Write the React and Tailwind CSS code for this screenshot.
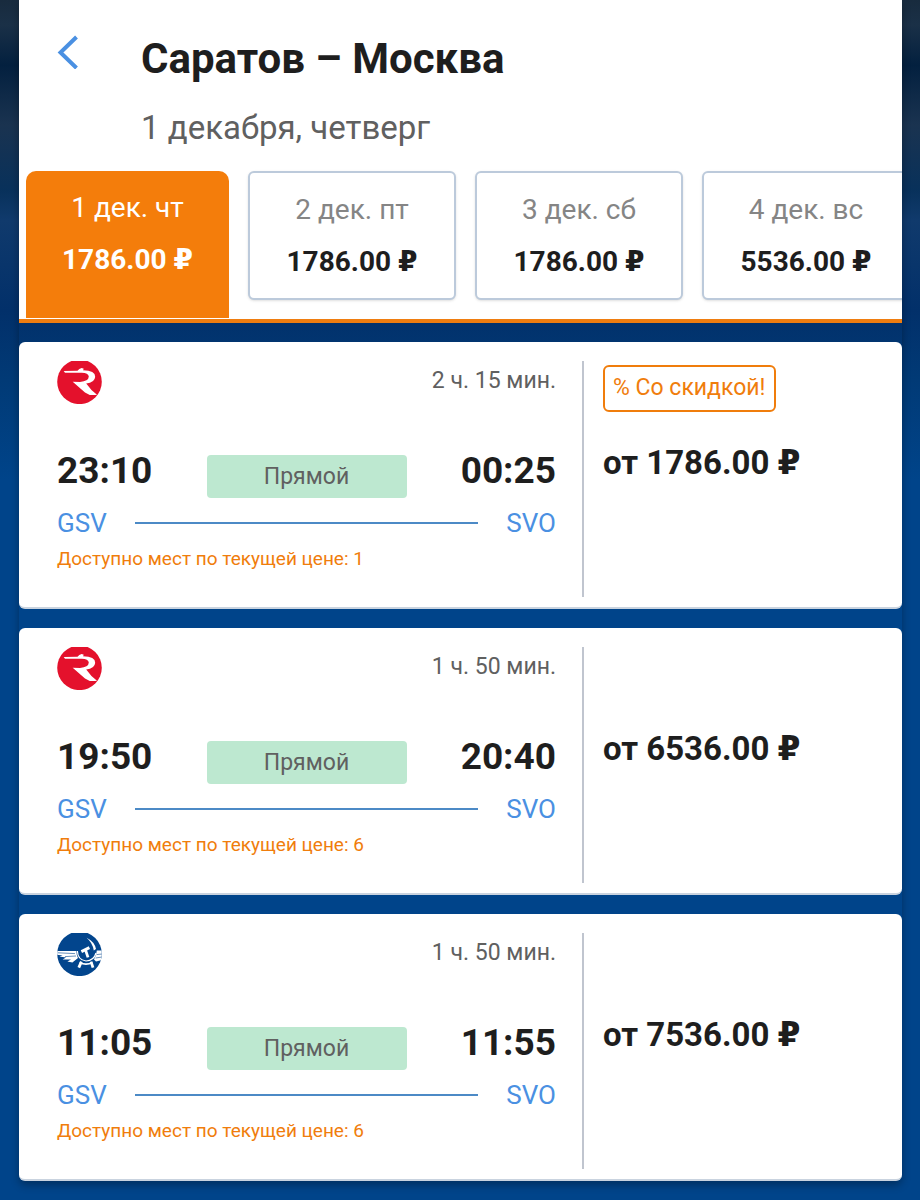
import React, { useState } from 'react';

const days = [
  { id: 1, date: '1 дек. чт', price: '1786.00' },
  { id: 2, date: '2 дек. пт', price: '1786.00' },
  { id: 3, date: '3 дек. сб', price: '1786.00' },
  { id: 4, date: '4 дек. вс', price: '5536.00' },
];

const flights = [
  { id: 1, airline: 'rossiya', duration: '2 ч. 15 мин.', departure: '23:10', arrival: '00:25', seats: 1, price: '1786.00', discount: true },
  { id: 2, airline: 'rossiya', duration: '1 ч. 50 мин.', departure: '19:50', arrival: '20:40', seats: 6, price: '6536.00', discount: false },
  { id: 3, airline: 'aeroflot', duration: '1 ч. 50 мин.', departure: '11:05', arrival: '11:55', seats: 6, price: '7536.00', discount: false },
];

const RossiyaLogo = () => (
  <svg width="45" height="43" viewBox="0 0 45 43" role="img" aria-label="Россия">
    <circle cx="22.5" cy="20.8" r="22.3" fill="#e4112c" />
    <path
      d="M6.7 10 L20.5 9.8 Q22 7.4 24.7 7 L26.8 7.8 L26 9.3 Q38.4 9.6 38.2 15.8 Q37.8 21.6 29.2 22.6 Q34 29.6 40 33.8 Q32.6 35 28 31.4 L15.7 20.7 L23 20.9 Q31.6 20.4 31.8 15.6 Q31.4 12 24.7 11.8 L8 11.8 Z"
      fill="#fff"
    />
  </svg>
);

const AeroflotLogo = () => (
  <svg width="45" height="43" viewBox="0 0 45 43" role="img" aria-label="Аэрофлот">
    <defs>
      <clipPath id="aeroflot-disc">
        <circle cx="22.5" cy="20.8" r="22.3" />
      </clipPath>
    </defs>
    <circle cx="22.5" cy="20.8" r="22.3" fill="#02458d" />
    <g clipPath="url(#aeroflot-disc)">
      {/* Wings */}
      <path d="M0 18 L19.4 18 Q19.4 22 21 25 L15.4 29.6 L10.4 28.6 L14 26.6 L5.6 26.4 L9 24.4 L2.4 23.6 L5.6 22.4 L0 21.8 Z" fill="#fff" />
      <path d="M1 19.8 L18 20.6 M8 23.6 L19 23" stroke="#02458d" strokeWidth="0.6" />
      <path d="M39.8 17.6 L45 17.6 L45 27 L39 28.6 L37 26.4 Q39.6 22.4 39.8 17.6 Z" fill="#fff" />
      <path d="M39.6 21.6 L45 21 M38.6 25 L45 24" stroke="#02458d" strokeWidth="0.6" />
      {/* Gear */}
      <path d="M20.4 18 Q20.6 26.8 29 28 Q37 27.6 39 20" fill="none" stroke="#fff" strokeWidth="1.2" />
      <path d="M24.4 28.6 L21.8 34.6 M34 28.6 L36 34.6" stroke="#fff" strokeWidth="2.8" />
      <path d="M22.6 29.8 Q29 32.4 35.4 29.8" fill="none" stroke="#fff" strokeWidth="1.6" />
      {/* Hammer and sickle */}
      <path d="M24.4 18.6 L32.4 14.6" stroke="#fff" strokeWidth="3" />
      <path d="M28.4 16.6 L31 24.4" stroke="#fff" strokeWidth="2.8" />
      <path d="M29.6 4.8 Q37.6 8.8 39 16 L36.8 17.4 Q35.4 9.6 29.6 4.8 Z" fill="#fff" />
    </g>
  </svg>
);

const Ruble = () => <span className="font-['DejaVu_Sans',sans-serif] leading-none">₽</span>;

const FlightCard = ({ flight }) => (
  <article className="flex rounded-md border-b-2 border-[#c9d3df] bg-white pt-[19px] pb-[10px]">
    <div className="flex-1 pr-[26px] pb-[26px] pl-[38px]">
      <div className="flex items-start justify-between">
        {flight.airline === 'rossiya' ? <RossiyaLogo /> : <AeroflotLogo />}
        <span className="text-[23px] leading-10 text-[#606060]">{flight.duration}</span>
      </div>

      <div className="mt-10 flex items-end justify-between text-[37px] leading-[54px] font-bold text-[#1e1e1e]">
        <time>{flight.departure}</time>
        <span className="h-[43px] w-[200px] rounded-[4px] bg-[#bde8d0] text-center text-[23px] leading-[43px] font-normal text-[#606060]">
          Прямой
        </span>
        <time>{flight.arrival}</time>
      </div>

      <div className="mt-[9px] flex items-center gap-7 text-[26px] leading-8 text-[#4a90e2]">
        <span>GSV</span>
        <span className="h-[2px] flex-1 bg-[#4c8ac6]" />
        <span>SVO</span>
      </div>

      <p className="mt-2 text-[19px] leading-6 text-[#f07d0c]">
        Доступно мест по текущей цене: {flight.seats}
      </p>
    </div>

    <div className="w-[320px] border-l-2 border-[#c0c5cf] pl-[19px]">
      <div className="h-[82px] pt-1">
        {flight.discount && (
          <span className="inline-block rounded-md border-2 border-[#f07d0c] px-2 pb-px text-[23px] leading-[42px] text-[#f07d0c]">
            % Со скидкой!
          </span>
        )}
      </div>
      <p className="text-[33px] leading-10 font-bold text-[#1e1e1e]">
        от {flight.price} <Ruble />
      </p>
    </div>
  </article>
);

const App = () => {
  const [activeDay, setActiveDay] = useState(1);

  return (
    <div className="min-h-screen overflow-hidden bg-[#00448a] bg-[linear-gradient(to_bottom,#182b3e_0px,#1a3047_25px,#03203f_65px,#1a3350_125px,#08315b_190px,#103a6c_220px,#02306a_310px,#013a76_380px,#00448a_480px)] pr-[18px] pl-[19px] font-['Roboto',sans-serif]">
      <main className="mb-[19px] rounded-b-md shadow-[0_4px_8px_rgba(0,0,0,0.3)]">
        <header className="overflow-hidden border-b-4 border-[#ef7d10] bg-white pt-[35px] pb-px">
          <div className="flex items-start pl-[38px]">
            <button type="button" aria-label="Назад" className="w-[84px] cursor-pointer">
              <svg width="22" height="34" viewBox="0 0 22 34" fill="none" stroke="#4a90e2" strokeWidth="4">
                <path d="M19.5 2 L3.5 17.5 L19.5 33" />
              </svg>
            </button>
            <div>
              <h1 className="text-[42px] leading-[48px] font-bold text-[#1e1e1e]">Саратов – Москва</h1>
              <p className="mt-[25px] text-[33px] leading-10 text-[#606060]">1 декабря, четверг</p>
            </div>
          </div>

          {/* Days */}
          <div className="mt-[23px] flex h-[147px] items-start gap-[19px] pl-[7px]">
            {days.map((day) => (
              <button
                key={day.id}
                type="button"
                onClick={() => setActiveDay(day.id)}
                className={
                  day.id === activeDay
                    ? 'w-[203px] shrink-0 cursor-pointer rounded-t-[10px] bg-[#f47d0b] pt-[21px] pb-[42px] text-white'
                    : 'w-[208px] shrink-0 cursor-pointer rounded-md border-2 border-[#bccadb] bg-white pt-[21px] pb-5 text-[#1e1e1e] shadow-sm'
                }
              >
                <span className={day.id === activeDay ? 'block text-[28px] leading-8' : 'block text-[28px] leading-8 text-[#858585]'}>
                  {day.date}
                </span>
                <span className="mt-5 block text-[28px] leading-8 font-bold">
                  {day.price} <Ruble />
                </span>
              </button>
            ))}
          </div>
        </header>

        <section className="mt-[19px] flex flex-col gap-[19px]">
          {flights.map((flight) => (
            <FlightCard key={flight.id} flight={flight} />
          ))}
        </section>
      </main>
    </div>
  );
};

export default App;
